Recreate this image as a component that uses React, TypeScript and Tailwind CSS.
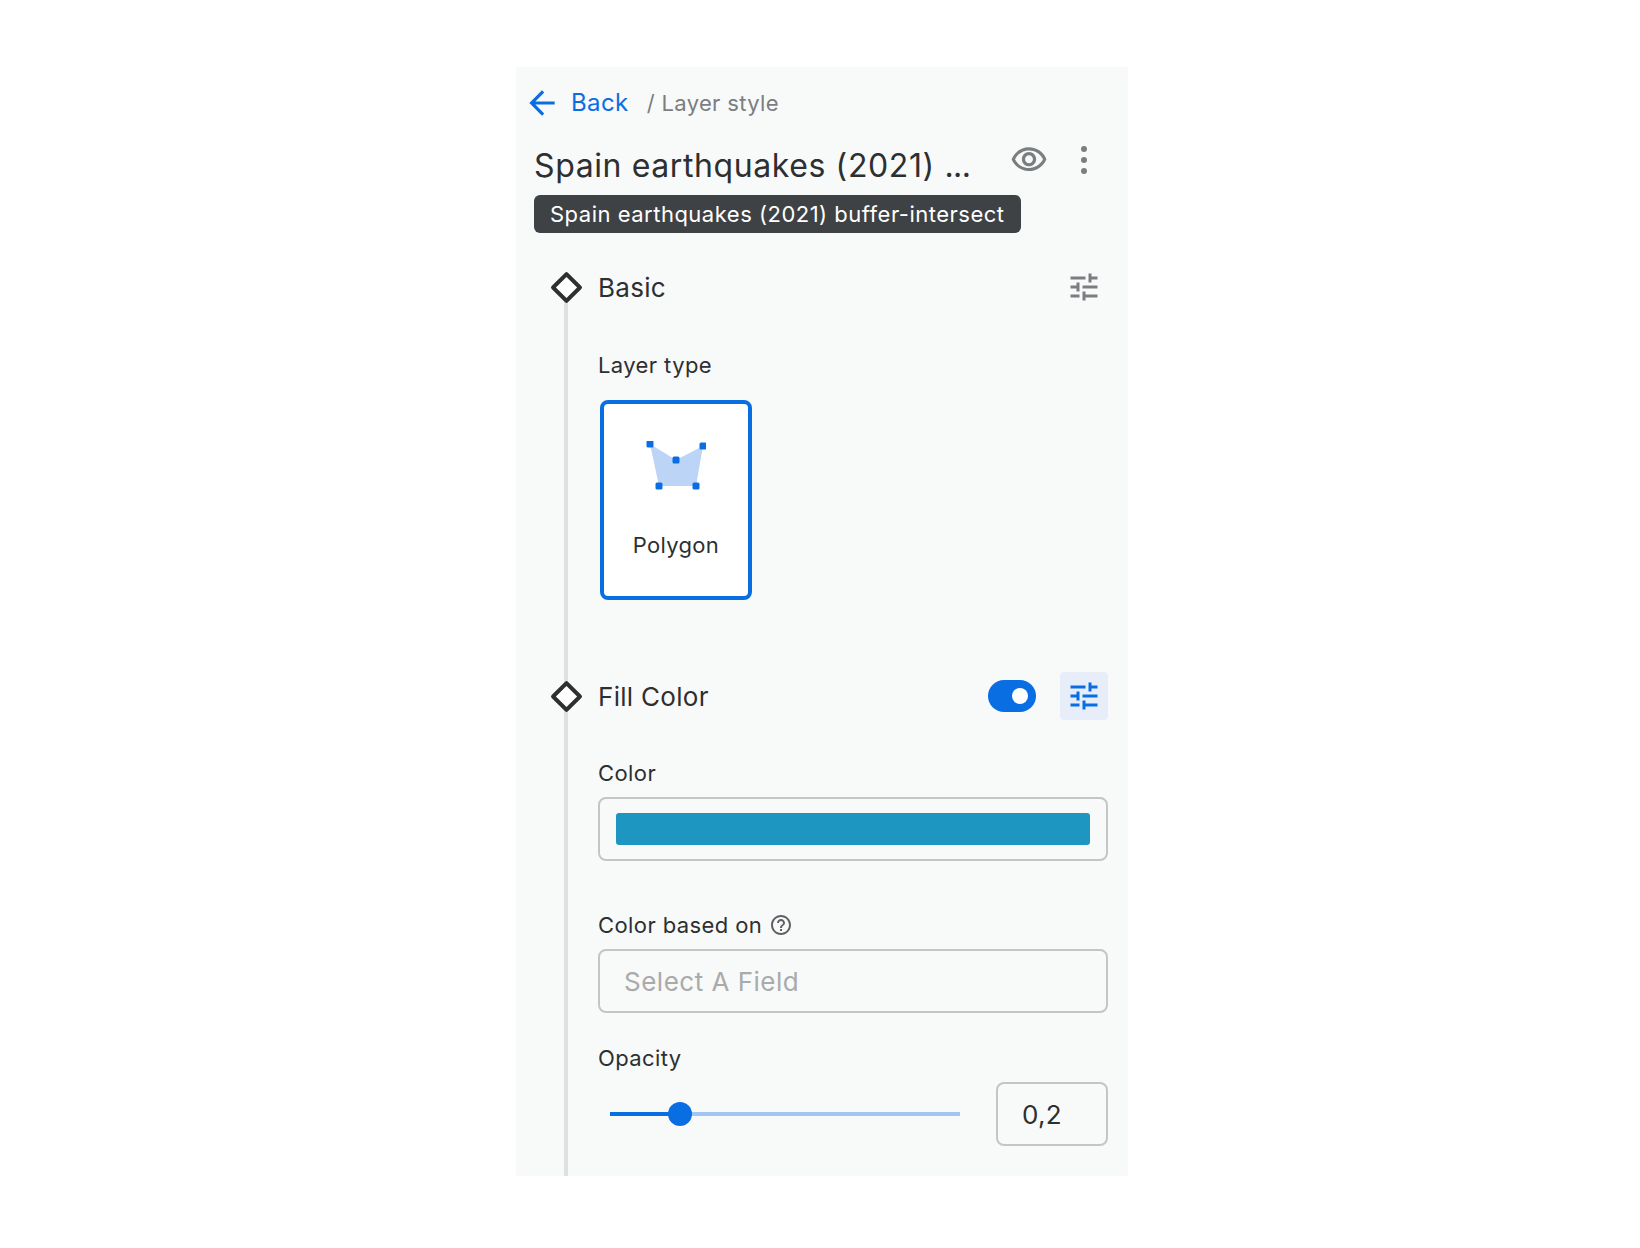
import React from "react";

const tunePath =
  "M3 17v2h6v-2H3zM3 5v2h10V5H3zm10 16v-2h8v-2h-8v-2h-2v6h2zM7 9v2H3v2h4v2h2V9H7zm14 4v-2H11v2h10zm-6-4h2V7h4V5h-4V3h-2v6z";

const TuneIcon = ({ className }: { className: string }) => (
  <svg viewBox="0 0 24 24" className={className} fill="currentColor">
    <path d={tunePath} />
  </svg>
);

const Diamond = ({ lineAbove }: { lineAbove?: boolean }) => (
  <div className="relative w-[32px] h-[48px] flex items-center justify-center shrink-0">
    {lineAbove && <div className="absolute left-[14px] top-0 w-[4px] h-[24px] bg-[#dfe1e1]"></div>}
    <div className="absolute left-[14px] bottom-0 w-[4px] h-[24px] bg-[#dfe1e1]"></div>
    <div className="relative w-[23px] h-[23px] rotate-45 border-[4px] border-[#2d2f31] bg-white rounded-[2px]"></div>
  </div>
);

const Label = ({ children }: { children: React.ReactNode }) => (
  <div className="text-[22px] leading-[32px] tracking-[0.4px] text-[#2d2f31]">{children}</div>
);

export default function App() {
  return (
    <div className="w-[1640px] h-[1248px] bg-white pt-[67px] pl-[516px] font-['Inter',sans-serif]">
      <div className="w-[612px] h-[1109px] bg-[#f8f9f9] overflow-hidden">
        {/* breadcrumb */}
        <div className="flex items-center h-[48px] mt-[12px] pl-[7px]">
          <svg viewBox="0 0 24 24" className="w-[38px] h-[38px] text-[#0a6ee3]" fill="currentColor">
            <path d="M20 11H7.83l5.59-5.59L12 4l-8 8 8 8 1.41-1.41L7.83 13H20v-2z" />
          </svg>
          <span className="ml-[10px] text-[24px] tracking-[0.4px] text-[#0a6ee3]">Back</span>
          <span className="ml-[18px] text-[22px] tracking-[0.35px] text-[#7b7e80]">/ Layer style</span>
        </div>

        {/* title */}
        <div className="flex items-start justify-between pl-[18px] pr-[28px] mt-[15px]">
          <div className="text-[32px] leading-[48px] tracking-[0.6px] text-[#2d2f31]">
            Spain earthquakes (2021) <span className="tracking-[-0.6px]">...</span>
          </div>
          <div className="flex items-center gap-[20px] -mt-[1px]">
            <svg viewBox="0 0 24 24" className="w-[38px] h-[38px] -ml-[1px] text-[#7b7e80]" fill="currentColor">
              <path d="M12 6c3.79 0 7.17 2.13 8.82 5.5C19.17 14.87 15.79 17 12 17s-7.17-2.13-8.82-5.5C4.83 8.13 8.21 6 12 6m0-2C7 4 2.73 7.11 1 11.5 2.73 15.89 7 19 12 19s9.27-3.11 11-7.5C21.27 7.11 17 4 12 4zm0 5c1.38 0 2.5 1.12 2.5 2.5S13.38 14 12 14s-2.5-1.12-2.5-2.5S10.62 9 12 9m0-2c-2.48 0-4.5 2.02-4.5 4.5S9.52 16 12 16s4.5-2.02 4.5-4.5S14.48 7 12 7z" />
            </svg>
            <div className="w-[32px] flex flex-col items-center gap-[5px]">
              <div className="w-[6px] h-[6px] rounded-full bg-[#7b7e80]"></div>
              <div className="w-[6px] h-[6px] rounded-full bg-[#7b7e80]"></div>
              <div className="w-[6px] h-[6px] rounded-full bg-[#7b7e80]"></div>
            </div>
          </div>
        </div>

        {/* tooltip */}
        <div className="ml-[18px] mt-[5px] w-fit h-[38px] px-[16px] flex items-center rounded-[6px] bg-[#3f4245] text-white text-[22px] tracking-[0.5px]">
          Spain earthquakes (2021) buffer-intersect
        </div>

        {/* basic */}
        <div className="flex items-center pl-[34px] pr-[20px] mt-[30px] h-[48px]">
          <Diamond />
          <div className="ml-[16px] text-[26px] tracking-[0.3px] text-[#2d2f31] flex-1">Basic</div>
          <div className="w-[48px] h-[48px] flex items-center justify-center">
            <TuneIcon className="w-[36px] h-[36px] text-[#7b7e80]" />
          </div>
        </div>
        <div className="ml-[48px] border-l-[4px] border-[#dfe1e1] pl-[30px] pr-[20px] h-[361px] pt-[38px]">
          <Label>Layer type</Label>
          <div className="mt-[19px] ml-[2px] w-[152px] h-[200px] border-[4px] border-[#0a6ee3] rounded-[8px] bg-white flex flex-col items-center">
            <svg viewBox="0 0 60 50" className="w-[60px] h-[50px] mt-[37px]">
              <polygon points="4,3 30,19 57,5 50,45 13,45" fill="#bcd5f6" />
              <rect x="0.5" y="-0.5" width="7" height="7" rx="1.5" fill="#0a6ee3" />
              <rect x="53.5" y="1.5" width="7" height="7" rx="1.5" fill="#0a6ee3" />
              <rect x="26.5" y="15.5" width="7" height="7" rx="1.5" fill="#0a6ee3" />
              <rect x="9.5" y="41.5" width="7" height="7" rx="1.5" fill="#0a6ee3" />
              <rect x="46.5" y="41.5" width="7" height="7" rx="1.5" fill="#0a6ee3" />
            </svg>
            <div className="mt-[38px] text-[22px] tracking-[0.3px] text-[#2d2f31]">Polygon</div>
          </div>
        </div>

        {/* fill color */}
        <div className="flex items-center pl-[34px] pr-[20px] h-[48px]">
          <Diamond lineAbove />
          <div className="ml-[16px] text-[26px] tracking-[0.3px] text-[#2d2f31] flex-1">Fill Color</div>
          <div className="w-[48px] h-[32px] rounded-full bg-[#0a6ee3] flex items-center justify-end pr-[8px] mr-[24px]">
            <div className="w-[16px] h-[16px] rounded-full bg-white"></div>
          </div>
          <div className="w-[48px] h-[48px] rounded-[4px] bg-[#e7eefa] flex items-center justify-center">
            <TuneIcon className="w-[36px] h-[36px] text-[#0a6ee3]" />
          </div>
        </div>
        <div className="ml-[48px] border-l-[4px] border-[#dfe1e1] pl-[30px] pr-[20px] h-[500px] pt-[37px]">
          <Label>Color</Label>
          <div className="mt-[8px] h-[64px] border-2 border-[#c4c6c6] rounded-[8px] flex items-center px-[16px]">
            <div className="w-full h-[32px] rounded-[3px] bg-[#1d97c1]"></div>
          </div>

          <div className="mt-[48px] flex items-center">
            <Label>Color based on</Label>
            <svg viewBox="0 0 24 24" className="ml-[7px] w-[24px] h-[24px] text-[#5f6264]" fill="currentColor">
              <path d="M11 18h2v-2h-2v2zm1-16C6.48 2 2 6.48 2 12s4.48 10 10 10 10-4.48 10-10S17.52 2 12 2zm0 18c-4.41 0-8-3.59-8-8s3.59-8 8-8 8 3.59 8 8-3.59 8-8 8zm0-14c-2.21 0-4 1.79-4 4h2c0-1.1.9-2 2-2s2 .9 2 2c0 2-3 1.75-3 5h2c0-2.25 3-2.5 3-5 0-2.21-1.79-4-4-4z" />
            </svg>
          </div>
          <div className="mt-[8px] h-[64px] border-2 border-[#c4c6c6] rounded-[8px] flex items-center pl-[24px] text-[26px] tracking-[0.5px] text-[#a9abab]">
            Select A Field
          </div>

          <div className="mt-[29px]">
            <Label>Opacity</Label>
          </div>
          <div className="mt-[8px] flex items-center">
            <div className="relative ml-[12px] w-[350px] h-[4px] bg-[#a3c5f2]">
              <div className="w-[70px] h-[4px] bg-[#0a6ee3]"></div>
              <div className="absolute left-[58px] -top-[10px] w-[24px] h-[24px] rounded-full bg-[#0a6ee3]"></div>
            </div>
            <div className="ml-auto w-[112px] h-[64px] border-2 border-[#c4c6c6] rounded-[8px] flex items-center pl-[24px] text-[26px] tracking-[0.3px] text-[#2d2f31]">
              0,2
            </div>
          </div>
        </div>
      </div>
    </div>
  );
}
